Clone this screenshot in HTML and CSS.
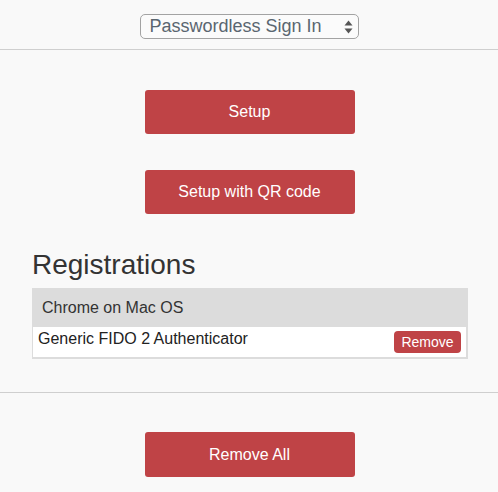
FILE: index.html
```html
<!DOCTYPE html>
<html lang="en">
<head>
<meta charset="utf-8">
<title>Passwordless Sign In</title>
<link rel="stylesheet" href="styles.css">
</head>
<body>
<header class="top">
  <div class="select-wrap">
    <select class="mode-select">
      <option>Passwordless Sign In</option>
    </select>
    <svg class="select-arrows" width="9" height="14" viewBox="0 0 9 14" aria-hidden="true">
      <path d="M4.5 0.5 L8.5 5.5 L0.5 5.5 Z" fill="#555"/>
      <path d="M4.5 13.5 L8.5 8.5 L0.5 8.5 Z" fill="#555"/>
    </svg>
  </div>
</header>
<main class="content">
  <section class="actions">
    <button class="btn btn-wide">Setup</button>
    <button class="btn btn-wide">Setup with QR code</button>
  </section>
  <section class="registrations">
    <h2 class="reg-title">Registrations</h2>
    <div class="reg-table">
      <div class="reg-head">Chrome on Mac OS</div>
      <div class="reg-row">
        <span class="reg-name">Generic FIDO 2 Authenticator</span>
        <button class="btn btn-small">Remove</button>
      </div>
    </div>
  </section>
</main>
<footer class="bottom">
  <button class="btn btn-wide btn-tall">Remove All</button>
</footer>
</body>
</html>
```
FILE: styles.css
```css
html, body {
  margin: 0;
  padding: 0;
  background: #f9f9f9;
  font-family: "Liberation Sans", Arial, sans-serif;
  color: #333;
}

.top {
  display: flex;
  justify-content: center;
  padding: 14px 0 10px;
  border-bottom: 1px solid #cfcfcf;
}

.select-wrap {
  position: relative;
  width: 219px;
  height: 25px;
}

.mode-select {
  appearance: none;
  -webkit-appearance: none;
  width: 100%;
  height: 100%;
  box-sizing: border-box;
  margin: 0;
  padding: 0 0 0 9px;
  border: 1px solid #a3a3a3;
  border-radius: 5px;
  background: #fbfbfb;
  color: #5a6670;
  font-family: "Liberation Sans", Arial, sans-serif;
  font-size: 18px;
  line-height: 23px;
}

.select-arrows {
  position: absolute;
  right: 6px;
  top: 6px;
}

.content {
  padding: 40px 0 0;
  border-bottom: 1px solid #cfcfcf;
}

.actions {
  display: flex;
  flex-direction: column;
  align-items: center;
  gap: 36px;
}

.btn {
  border: none;
  background: #bf4346;
  color: #fff;
  font-family: "Liberation Sans", Arial, sans-serif;
  cursor: pointer;
  margin: 0;
}

.btn-wide {
  width: 210px;
  height: 44px;
  border-radius: 3px;
  font-size: 16px;
  margin-left: 1px;
}

.btn-tall {
  height: 45px;
}

.registrations {
  padding: 36px 30px 33px 32px;
}

.reg-title {
  margin: 0 0 8px;
  font-size: 28px;
  line-height: 30px;
  font-weight: normal;
  color: #333;
}

.reg-table {
  border: 2px solid #dcdcdc;
  border-top: none;
  border-left-width: 1px;
  background: #dcdcdc;
}

.reg-head {
  height: 39px;
  line-height: 39px;
  padding-left: 9px;
  font-size: 16px;
  color: #333;
}

.reg-row {
  display: flex;
  align-items: center;
  justify-content: space-between;
  height: 30px;
  padding: 0 5px 0 5px;
  background: #fff;
  font-size: 16px;
  color: #222;
}

.reg-name {
  position: relative;
  top: -3px;
}

.btn-small {
  width: 67px;
  height: 22px;
  border-radius: 4px;
  font-size: 14px;
  padding: 0;
}

.bottom {
  display: flex;
  justify-content: center;
  padding-top: 39px;
}
```
